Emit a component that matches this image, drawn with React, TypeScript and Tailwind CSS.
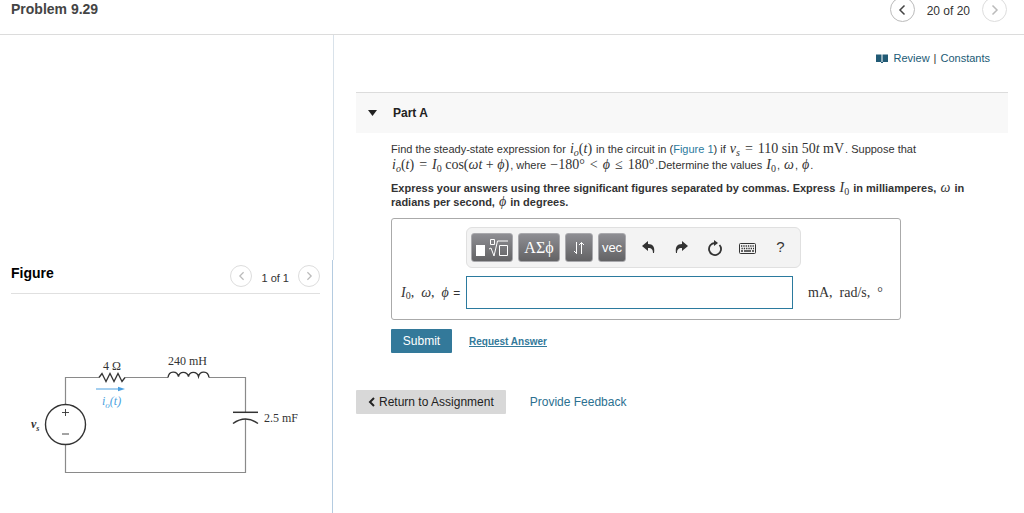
import React from "react";
import type { ReactNode } from "react";

function Chevron({ dir, className }: { dir: "left" | "right"; className: string }) {
  return (
    <svg viewBox="0 0 8 12" className={className} fill="none" stroke="currentColor" strokeWidth="1.5">
      <path d={dir === "left" ? "M6.5 1.5 2 6l4.5 4.5" : "M1.5 1.5 6 6l-4.5 4.5"} />
    </svg>
  );
}

function M({ children }: { children: ReactNode }) {
  return (
    <span className="px-px font-['Liberation_Serif',serif] text-[14px] leading-none font-normal whitespace-nowrap">
      {children}
    </span>
  );
}

function Sub({ children }: { children: ReactNode }) {
  return <sub className="text-[10px] leading-none">{children}</sub>;
}

function Rel({ children }: { children: ReactNode }) {
  return <span className="mx-[5px]">{children}</span>;
}

function Circuit() {
  return (
    <svg
      viewBox="0 0 290 130"
      className="block h-[130px] w-[290px] font-['Liberation_Serif',serif] text-[12px]"
      fill="none"
      stroke="#333"
      role="img"
      aria-label="Circuit"
    >
      <g stroke="#8a8a8a" strokeWidth="1.2">
        <path d="M45.5 54.500V27.500H79M105 27.500H148M189 27.500H225.500V62M225.500 69V122.500H45.500V94.500" />
      </g>
      <path d="M79 27.500l3-4 4 8 4-8 4 8 4-8 4 8 3-4" strokeWidth="1.3" />
      <path d="M148 27.500c1-7 9-7 10.500-1c1-5.500 8.500-5.500 10 0c1-5.500 8.500-5.500 10 0c1.500-6 9.500-6 10.500 1" strokeWidth="1.4" />
      <circle cx="45.500" cy="74.500" r="20" strokeWidth="1.4" />
      <path d="M42 62.500h7M45.500 59v7M42 84h7" strokeWidth="0.900" />
      <path d="M213 62.300h25" strokeWidth="1.5" />
      <path d="M213 73.500q12.500-9 25 0" strokeWidth="1.5" />
      <path d="M76 39h24" stroke="#4a9fe0" strokeWidth="1" />
      <path d="M98 36.800l7 2.200-7 2.200z" fill="#4a9fe0" stroke="none" />
      <g fill="#333" stroke="none">
        <text x="83" y="20">4 Ω</text>
        <text x="148" y="15">240 mH</text>
        <text x="244" y="72">2.5 mF</text>
        <text x="11" y="78" fontStyle="italic" fontWeight="bold">v<tspan dy="3" fontSize="8">s</tspan></text>
        <text x="82" y="55" fontStyle="italic" fill="#4a9fe0">i<tspan dy="3" fontSize="9">o</tspan><tspan dy="-3">(t)</tspan></text>
      </g>
    </svg>
  );
}

const toolKey =
  "flex h-[29px] items-center justify-center rounded-[3px] border border-[#a9a9ad] bg-linear-to-b from-[#8e8e93] to-[#636365] text-white";
const toolIcon = "flex h-6 w-[33px] items-center justify-center text-[#333]";

export default function App() {
  return (
    <div className="flex min-h-screen flex-col bg-white font-['Liberation_Sans',sans-serif] text-[12px] text-[#333]">
      <header className="flex h-[35px] items-start justify-between border-b border-[#dcdcdc] pr-[17px] pl-[11px]">
        <h1 className="pt-px text-[14px] leading-4 font-bold text-[#444]">Problem 9.29</h1>
        <nav className="-mt-[3px] flex items-center gap-3">
          <button aria-label="Previous item" className="flex size-[25px] items-center justify-center rounded-full border border-[#bbb] text-[#444]">
            <Chevron dir="left" className="h-3 w-2" />
          </button>
          <span className="pt-[3px] leading-4">20 of 20</span>
          <button aria-label="Next item" className="flex size-[25px] items-center justify-center rounded-full border border-[#ddd] text-[#bbb]">
            <Chevron dir="right" className="h-3 w-2" />
          </button>
        </nav>
      </header>

      <div className="flex flex-1">
        <aside className="flex w-[334px] shrink-0 flex-col">
          <div className="h-[225px] border-r border-[#d9e2ea]" />
          <section className="mr-px flex-1 border-r border-[#b4cbe0] pr-3 pl-[11px]">
            <div className="flex h-[34px] items-start justify-between border-b border-[#e0e0e0]">
              <h2 className="pt-[5px] text-[14px] leading-4 font-bold text-black">Figure</h2>
              <div className="flex items-center gap-[9px] pt-[5px]">
                <button aria-label="Previous figure" className="flex size-[22px] items-center justify-center rounded-full border border-[#ddd] text-[#bbb]">
                  <Chevron dir="left" className="h-[10px] w-[7px]" />
                </button>
                <span className="pt-1 text-[11px] leading-4">1 of 1</span>
                <button aria-label="Next figure" className="flex size-[22px] items-center justify-center rounded-full border border-[#ddd] text-[#bbb]">
                  <Chevron dir="right" className="h-[10px] w-[7px]" />
                </button>
              </div>
            </div>
            <div className="pt-14 pl-[9px]">
              <Circuit />
            </div>
          </section>
        </aside>

        <main className="min-w-0 flex-1 pr-4 pl-[22px]">
          <div className="flex h-[57px] items-start justify-end gap-1 pt-[15px] pr-[18px] text-[11px] leading-4">
            <svg viewBox="0 0 12 9" className="mt-1 mr-[2px] h-[9px] w-3 text-[#215a75]" fill="currentColor">
              <path d="M0 0.500h5.500V8H0zM6.500 0.500H12V8H6.500zM5 8h2v1H5z" />
            </svg>
            <a href="#review" className="text-[#215a75]">Review</a>
            <span>|</span>
            <a href="#constants" className="text-[#215a75]">Constants</a>
          </div>

          <button aria-expanded="true" className="flex h-[41px] w-full items-center gap-4 border-t border-[#dcdcdc] bg-[#f8f8f8] pl-3 text-left text-[12px] font-bold text-[#222]">
            <svg viewBox="0 0 9 6" className="h-[6px] w-[9px]" fill="currentColor"><path d="M0 0h9L4.500 6z" /></svg>
            Part A
          </button>

          <div className="pt-2 pr-[22px] pl-[35px]">
            <p className="text-[11px] leading-4">
              Find the steady-state expression for <M><i>i</i><Sub><i>o</i></Sub>(<i>t</i>)</M> in the circuit in (
              <a href="#figure" className="text-[#2b7a9e]">Figure 1</a>) if{" "}
              <M><i>v</i><Sub><i>s</i></Sub><Rel>=</Rel>110 sin 50<i>t</i> mV</M>. Suppose that{" "}
              <M><i>i</i><Sub><i>o</i></Sub>(<i>t</i>)<Rel>=</Rel><i>I</i><Sub>0</Sub> cos(<i>ωt</i> + <i>ϕ</i>)</M>, where{" "}
              <M>−180°<Rel>&lt;</Rel><i>ϕ</i><Rel>≤</Rel>180°</M>.Determine the values <M><i>I</i><Sub>0</Sub></M>, <M><i>ω</i></M>, <M><i>ϕ</i></M>.
            </p>
            <p className="mt-2 text-[11px] leading-[14px] font-bold">
              Express your answers using three significant figures separated by commas. Express{" "}
              <M><i>I</i><Sub>0</Sub></M> in milliamperes, <M><i>ω</i></M> in radians per second, <M><i>ϕ</i></M> in degrees.
            </p>

            <div className="mt-[9px] max-w-[510px] rounded-[3px] border border-[#aaa] pt-2 pb-[10px]">
              <div className="ml-[74px] flex h-[41px] w-[335px] items-center rounded-[6px] border border-[#e0e0e0] bg-[#f3f3f3] pl-1">
                <div className="flex gap-[5px]">
                  <button aria-label="Templates" className={`${toolKey} w-[42px]`}>
                    <svg viewBox="0 0 34 20" className="h-5 w-[34px]" fill="none" stroke="white">
                      <path d="M1 7h9v11H1z" fill="white" stroke="none" />
                      <path d="M15.500 1.500h4v5h-4z" />
                      <path d="M14 11l2-1 3 8L22.500 3H33" />
                      <path d="M24.500 7.500h8v10h-8z" />
                    </svg>
                  </button>
                  <button aria-label="Symbols" className={`${toolKey} w-[42px] font-['Liberation_Serif',serif] text-[16px]`}>ΑΣϕ</button>
                  <button aria-label="Arrows" className={`${toolKey} w-7`}>
                    <svg viewBox="0 0 12 14" className="h-[14px] w-3" fill="none" stroke="white">
                      <path d="M3.500 1v11.500M1 10l2.500 2.500V1M8.500 13V1.500M6 4l2.500-2.500L11 4" />
                    </svg>
                  </button>
                  <button className={`${toolKey} w-7 text-[13px]`}>vec</button>
                </div>
                <div className="ml-[6px] flex">
                  <button aria-label="Undo" className={toolIcon}>
                    <svg viewBox="0 0 13 13" className="size-[13px]" fill="currentColor">
                      <path d="M0 5 6 0v3c5 0 7 3 6 9h-1c0-3-1-5-5-5v3z" />
                    </svg>
                  </button>
                  <button aria-label="Redo" className={toolIcon}>
                    <svg viewBox="0 0 13 13" className="size-[13px]" fill="currentColor">
                      <path d="M13 5 7 0v3C2 3 0 6 1 12h1c0-3 1-5 5-5v3z" />
                    </svg>
                  </button>
                  <button aria-label="Reset" className={toolIcon}>
                    <svg viewBox="0 0 16 16" className="size-4" fill="none" stroke="currentColor" strokeWidth="1.800">
                      <path d="M8 3a6 6 0 1 0 4.500 2" />
                      <path d="M7 0l4 3-4 3z" fill="currentColor" stroke="none" />
                    </svg>
                  </button>
                  <button aria-label="Keyboard" className={toolIcon}>
                    <svg viewBox="0 0 17 11" className="mt-[2px] h-[11px] w-[17px]" fill="none" stroke="currentColor">
                      <rect x="0.500" y="0.500" width="16" height="10" rx="1" />
                      <path d="M2 3h13M2.500 5.500H15" strokeDasharray="1.300 1" strokeWidth="1.300" />
                      <path d="M2 8h2M5 8h7M13 8h2" strokeWidth="1.300" />
                    </svg>
                  </button>
                  <button aria-label="Help" className={`${toolIcon} text-[15px]`}>?</button>
                </div>
              </div>
              <div className="mt-2 flex items-center">
                <label htmlFor="answer" className="w-[74px] shrink-0 pl-2 whitespace-nowrap">
                  <M><i>I</i><Sub>0</Sub>,&nbsp; <i>ω</i>,&nbsp; <i>ϕ</i></M> =
                </label>
                <input id="answer" type="text" className="h-[33px] w-[327px] border border-[#2b7a9e] bg-white px-2 outline-none" />
                <span className="pl-[14px]"><M>mA,&nbsp; rad/s,&nbsp; °</M></span>
              </div>
            </div>

            <div className="mt-[9px] flex items-center gap-[17px]">
              <button className="h-6 w-[61px] rounded-[1px] bg-[#33799a] text-[12px] text-white">Submit</button>
              <a href="#answer" className="text-[10px] font-bold text-[#33799a] underline">Request Answer</a>
            </div>
          </div>

          <div className="mt-[37px] flex items-center gap-6">
            <button className="flex h-6 items-center gap-1 rounded-[1px] bg-[#d8d8d8] px-3 text-[12px] text-[#222]">
              <svg viewBox="0 0 7 10" className="h-[10px] w-[7px]" fill="none" stroke="currentColor" strokeWidth="2"><path d="M6 1 2 5l4 4" /></svg>
              Return to Assignment
            </button>
            <a href="#feedback" className="text-[12px] text-[#2b7090]">Provide Feedback</a>
          </div>
        </main>
      </div>
    </div>
  );
}
